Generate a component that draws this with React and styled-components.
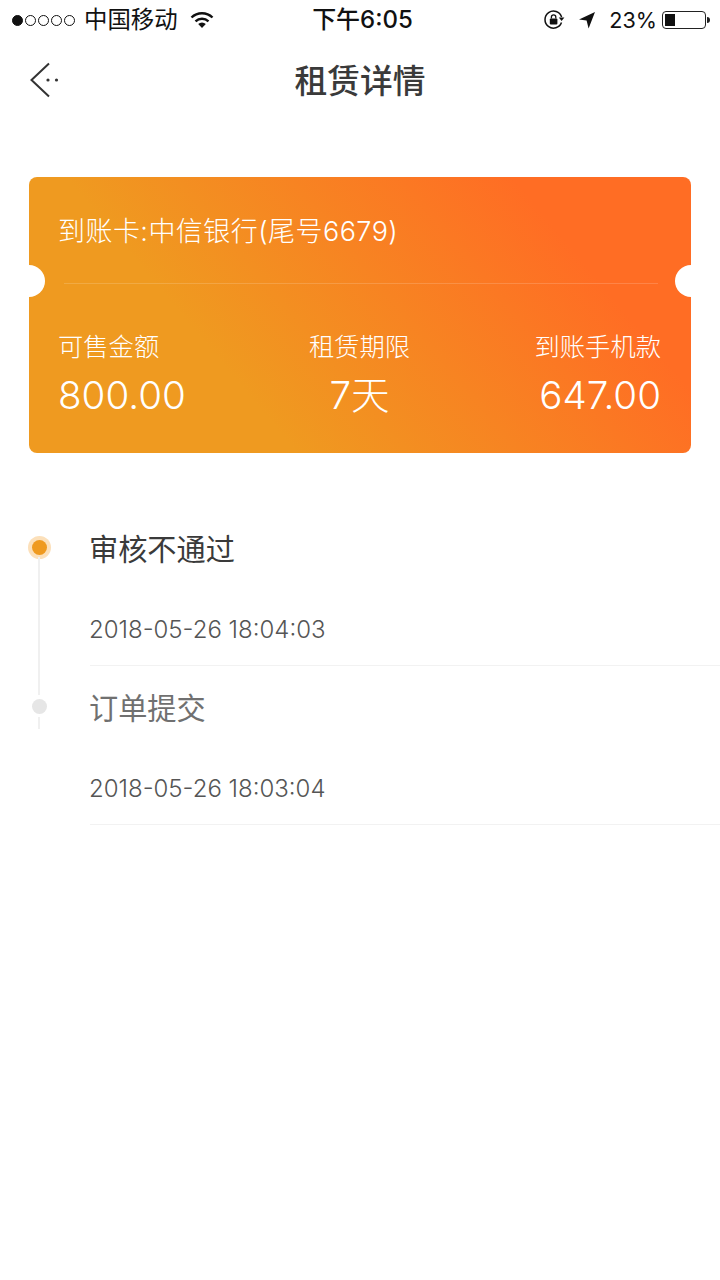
import React from 'react';
import styled, { createGlobalStyle } from 'styled-components';

const CJK = `"Inter", "Noto Sans CJK SC", sans-serif`;

const records = [
  { title: '审核不通过', time: '2018-05-26 18:04:03', active: true },
  { title: '订单提交', time: '2018-05-26 18:03:04', active: false },
];

const stats = [
  { label: '可售金额', value: '800.00', align: 'left' },
  { label: '租赁期限', value: '7天', align: 'center' },
  { label: '到账手机款', value: '647.00', align: 'right' },
];

const App = () => (
  <>
    <GlobalStyle />
    <Page>
      <StatusBar>
        <StatusSide>
          <Signal>
            <Dot $filled />
            <Dot />
            <Dot />
            <Dot />
            <Dot />
          </Signal>
          <Carrier>中国移动</Carrier>
          <svg width="24" height="18" viewBox="0 0 24 18">
            <path d="M1.5 6.5a15 15 0 0 1 21 0" fill="none" stroke="#111" strokeWidth="2.4" />
            <path d="M5.5 10.3a9.5 9.5 0 0 1 13 0" fill="none" stroke="#111" strokeWidth="2.4" />
            <path d="M12 17l-3.8-4a5.5 5.5 0 0 1 7.6 0z" fill="#111" />
          </svg>
        </StatusSide>
        <Clock>下午6:05</Clock>
        <StatusRight>
          <svg width="22" height="22" viewBox="0 0 22 22">
            <path d="M18.5 13.5A8.5 8.5 0 1 1 18.6 8" fill="none" stroke="#111" strokeWidth="1.5" />
            <path d="M15.8 8.6h5.6l-2.8 3.4z" fill="#111" />
            <rect x="6.8" y="9.5" width="7.6" height="6" rx="1" fill="#111" />
            <path d="M8.4 9.5V8a2.2 2.2 0 0 1 4.4 0v1.5" fill="none" stroke="#111" strokeWidth="1.3" />
          </svg>
          <svg width="20" height="20" viewBox="0 0 20 20">
            <path d="M18 2L2 9.4l7.6 1.2L11.6 18.5z" fill="#111" />
          </svg>
          <Percent>23%</Percent>
          <BatteryWrap>
            <Battery>
              <BatteryLevel style={{ width: `${23 * 1.2}%` }} />
            </Battery>
            <BatteryCap />
          </BatteryWrap>
        </StatusRight>
      </StatusBar>

      <NavBar>
        <BackButton>
          <svg width="30" height="36" viewBox="0 0 30 36">
            <path d="M20 1.5L2.5 18 20 34.5" fill="none" stroke="#333" strokeWidth="2" />
            <circle cx="19" cy="18" r="1.6" fill="#333" />
            <circle cx="27.5" cy="18" r="1.6" fill="#333" />
          </svg>
        </BackButton>
        <NavTitle>租赁详情</NavTitle>
      </NavBar>

      <Card>
        <Notch $side="left" />
        <Notch $side="right" />
        <CardHead>到账卡:中信银行(尾号6679)</CardHead>
        <CardRule />
        <StatRow>
          {stats.map((stat) => (
            <Stat key={stat.label} $align={stat.align}>
              <StatLabel>{stat.label}</StatLabel>
              <StatValue>{stat.value}</StatValue>
            </Stat>
          ))}
        </StatRow>
      </Card>

      <Timeline>
        {records.map((record) => (
          <Record key={record.time}>
            <Rail>
              <Marker $active={record.active} />
              {record.active ? <RailLine /> : <RailStub />}
            </Rail>
            <RecordBody>
              <RecordTitle $active={record.active}>{record.title}</RecordTitle>
              <RecordTime>{record.time}</RecordTime>
            </RecordBody>
          </Record>
        ))}
      </Timeline>
    </Page>
  </>
);

export default App;

// style
const GlobalStyle = createGlobalStyle`
  html, body {
    margin: 0;
    padding: 0;
    background: #fff;
  }
`;

const Page = styled.div`
  width: 720px;
  height: 1280px;
  overflow: hidden;
  background: #fff;
  font-family: ${CJK};
`;

const StatusBar = styled.div`
  display: flex;
  justify-content: space-between;
  align-items: center;
  position: relative;
  height: 40px;
  padding: 0 10px 0 12px;
  color: #111;
`;

const StatusSide = styled.div`
  display: flex;
  align-items: center;
`;

const Signal = styled.div`
  display: flex;
  gap: 2px;
  margin-right: 9px;
`;

const Dot = styled.span`
  box-sizing: border-box;
  width: 11px;
  height: 11px;
  border-radius: 50%;
  border: 1px solid #111;
  background: ${(p) => (p.$filled ? '#111' : 'transparent')};
`;

const Carrier = styled.span`
  font-size: 23.4px;
  line-height: 30px;
  margin-right: 12px;
`;

const Clock = styled.span`
  position: absolute;
  left: 5px;
  right: 0;
  top: 4px;
  text-align: center;
  font-size: 24px;
  line-height: 32px;
  font-weight: 500;
`;

const StatusRight = styled.div`
  display: flex;
  align-items: center;
  gap: 12px;
`;

const Percent = styled.span`
  font-size: 21.6px;
  margin-right: -7px;
`;

const BatteryWrap = styled.div`
  display: flex;
  align-items: center;
`;

const Battery = styled.div`
  box-sizing: border-box;
  width: 44px;
  height: 18px;
  padding: 2px;
  border: 1.5px solid #222;
  border-radius: 4px;
`;

const BatteryLevel = styled.div`
  height: 100%;
  background: #111;
`;

const BatteryCap = styled.div`
  width: 3px;
  height: 6px;
  margin-left: 1px;
  border-radius: 0 3px 3px 0;
  background: #222;
`;

const NavBar = styled.div`
  display: flex;
  align-items: center;
  justify-content: center;
  position: relative;
  height: 80px;
`;

const BackButton = styled.div`
  position: absolute;
  left: 29px;
  top: 22px;
  line-height: 0;
`;

const NavTitle = styled.h1`
  margin: -3px 0 0;
  font-size: 32.8px;
  font-weight: 500;
  color: #3a3a3a;
`;

const Card = styled.div`
  box-sizing: border-box;
  position: relative;
  width: 662px;
  height: 276px;
  margin: 57px 0 0 29px;
  border-radius: 8px;
  background: linear-gradient(50deg, #ef9a20 0%, #ef9a20 30%, #ff6d24 80%);
  color: #fff;
`;

const Notch = styled.span`
  position: absolute;
  top: 88px;
  ${(p) => p.$side}: -16px;
  width: 32px;
  height: 32px;
  border-radius: 50%;
  background: #fff;
`;

const CardHead = styled.div`
  padding: 37px 29px 0;
  font-size: 27px;
  font-weight: 300;
  line-height: 36px;
  letter-spacing: 0.45px;
  white-space: nowrap;
`;

const CardRule = styled.div`
  height: 1px;
  margin: 33px 33px 0 35px;
  background: rgba(255, 255, 255, 0.16);
`;

const StatRow = styled.div`
  display: grid;
  grid-template-columns: 1fr 1fr 1fr;
  padding: 46px 30px 0 29px;
`;

const Stat = styled.div`
  display: flex;
  flex-direction: column;
  gap: 7px;
  text-align: ${(p) => p.$align};
`;

const StatLabel = styled.span`
  font-size: 25.3px;
  font-weight: 300;
  line-height: 34px;
`;

const StatValue = styled.span`
  font-size: 38.6px;
  font-weight: 300;
  line-height: 48px;
`;

const Timeline = styled.div`
  margin-top: 54px;
`;

const Record = styled.div`
  display: flex;
  height: 159px;
`;

const Rail = styled.div`
  position: relative;
  flex: none;
  width: 90px;
`;

const Marker = styled.span`
  position: absolute;
  top: 33px;
  left: 32px;
  width: 15px;
  height: 15px;
  border-radius: 50%;
  background: ${(p) => (p.$active ? '#ef9a20' : '#e6e6e6')};
  ${(p) => p.$active && 'box-shadow: 0 0 0 4px #fce0ba;'}
`;

const RailLine = styled.span`
  position: absolute;
  left: 38px;
  top: 50px;
  width: 2px;
  height: 138px;
  background: #f0f0f0;
`;

const RailStub = styled.span`
  position: absolute;
  left: 38px;
  top: 51px;
  width: 2px;
  height: 12px;
  background: #f0f0f0;
`;

const RecordBody = styled.div`
  flex: 1;
  box-sizing: border-box;
  padding-top: 23px;
  border-bottom: 1px solid #f2f2f2;
`;

const RecordTitle = styled.div`
  margin-left: -1px;
  font-size: 29.2px;
  line-height: 40px;
  color: ${(p) => (p.$active ? '#3a3a3a' : '#707070')};
`;

const RecordTime = styled.div`
  margin-top: 45px;
  margin-left: -1px;
  font-size: 24px;
  font-weight: 300;
  line-height: 30px;
  color: #555;
`;
